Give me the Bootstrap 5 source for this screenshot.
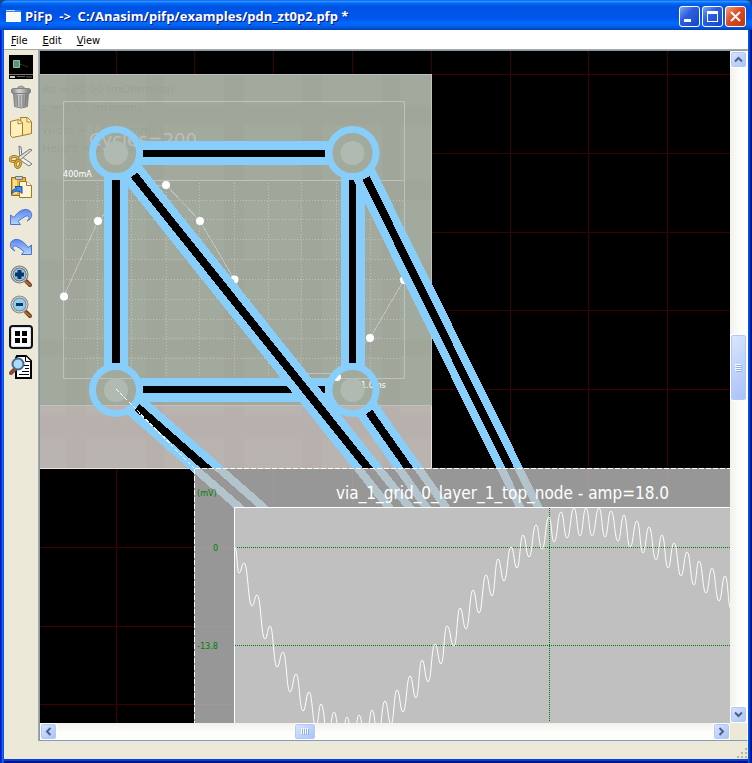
<!DOCTYPE html>
<html lang="en">
<head>
<meta charset="utf-8">
<meta name="viewport" content="width=device-width, initial-scale=1">
<title>PiFp</title>
<link href="https://cdn.jsdelivr.net/npm/bootstrap@5.3.0/dist/css/bootstrap.min.css" rel="stylesheet">
<style>
body{background:#174a7c;font-family:"DejaVu Sans Condensed","DejaVu Sans",sans-serif;font-size:11px;line-height:14px}
button{font:inherit}
.win{background:linear-gradient(90deg,#0019cf 0 1px,#0831d9 1px 2px,#166aee 2px 3px,#0855dd 3px 4px,transparent 4px),linear-gradient(270deg,#00138c 0 1px,#001ea0 1px 2px,#0441d8 2px 3px,#0855dd 3px 4px,transparent 4px),linear-gradient(0deg,#00138c 0 2px,#0441d8 2px);border-radius:8px 8px 0 0;overflow:hidden}
.titlebar{height:30px;padding:2px 6px 0 6px;background:linear-gradient(#0058ee 0,#3593ff 4%,#288eff 6%,#127dff 8%,#036ffc 10%,#0262ee 14%,#0057e5 20%,#0054e3 24%,#0055eb 56%,#005bf5 66%,#026afe 76%,#0062ef 86%,#0052d6 93%,#0040bb 100%)}
.wtitle{font-family:"Open Sans","Noto Sans",sans-serif;font-size:13px;line-height:20px;font-weight:700;color:#fff;text-shadow:1px 1px #0a1883;white-space:pre}
.wbtns{gap:2px}
.wbtn{width:21px;height:21px;border:1px solid #fff;border-radius:3px;padding:0;background:linear-gradient(135deg,#7ea4f4,#2b5fe0 40%,#1745c8);display:flex}
.wbtn.shut{background:linear-gradient(135deg,#f0a083,#dc4a25 45%,#c03510)}
.inner{margin:0 4px 4px;background:#ece9d8}
.inner,.fill-y{min-height:0}
.menus{height:20px;background:#fff;border-bottom:1px solid #aca899;padding:0 0 0 7px;gap:15px}
.menus button{border:0;background:none;padding:3px 0 0;color:#000;line-height:14px}
.tools{width:35px;border-right:1px solid #aca899;padding:5px 0 0 5px;gap:6px}
.tools button{width:24px;height:24px;border:0;padding:0;background:none;display:flex}
.view{border:1px solid #7f9db9;border-right-color:#fff;min-width:0}
.scene{background:#000;flex:1 1 0;min-width:0;min-height:0}
.scene svg{display:block;width:100%;height:100%}
.sbv{width:17px;background:linear-gradient(90deg,#f3f1ec,#fefefb 60%)}
.sbh{height:17px;background:linear-gradient(#f3f1ec,#fefefb 60%)}
.corner{width:17px;background:#ece9d8}
.sb{flex:0 0 17px;width:17px;height:17px;padding:0;border:1px solid #fff;border-radius:3px;background:linear-gradient(135deg,#dbe6ff,#c0d3fc 50%,#a9c1f6);box-shadow:inset 0 0 0 1px #b4c8f6;display:flex;align-items:center;justify-content:center}
.sb.tv{flex-basis:67px}
.sb.th{flex-basis:22px}
.before-v{flex:266 1 0}.after-v{flex:305 1 0}
.before-h{flex:237 1 0}.after-h{flex:397 1 0}
.status{height:18px;padding:0 1px 1px 0}
.t9{font:9px "DejaVu Sans Condensed","DejaVu Sans",sans-serif}
.t11{font:11px "DejaVu Sans","Noto Sans",sans-serif}
.t17{font:17px "DejaVu Sans Condensed","DejaVu Sans",sans-serif}
.t18{font:18px "DejaVu Sans","Noto Sans",sans-serif}
</style>
<script src="https://cdn.jsdelivr.net/npm/bootstrap@5.3.0/dist/js/bootstrap.bundle.min.js"></script>
</head>
<body>
<div class="win vh-100 d-flex flex-column">
<header class="titlebar d-flex align-items-center">
  <svg width="15" height="12" viewBox="0 0 15 12" class="flex-shrink-0" aria-hidden="true"><path fill="#fff" d="M0 0h15v12H0z"/><path fill="#2f86e8" d="M0 0h15v2H0z"/><path fill="#bfe0ff" d="M0 0h9v1H0z"/><path fill="#f8faf8" d="M1 3h13v8H1z"/></svg>
  <h1 class="wtitle m-0 ms-1 flex-grow-1 text-truncate">PiFp  -&gt;  C:/Anasim/pifp/examples/pdn_zt0p2.pfp *</h1>
  <div class="wbtns d-flex flex-shrink-0">
    <button class="wbtn" aria-label="Minimize"><svg width="19" height="19"><path fill="#fff" d="M4 12h7v3H4z"/></svg></button>
    <button class="wbtn" aria-label="Maximize"><svg width="19" height="19"><path fill="#fff" fill-rule="evenodd" d="M4 4h11v11H4zm1 3v7h9V7z"/></svg></button>
    <button class="wbtn shut" aria-label="Close"><svg width="19" height="19"><path stroke="#fff" stroke-width="2" d="M5 5l9 9M14 5l-9 9"/></svg></button>
  </div>
</header>
<div class="inner flex-grow-1 d-flex flex-column">
<nav class="menus d-flex flex-shrink-0" aria-label="Main">
  <button><u>F</u>ile</button><button><u>E</u>dit</button><button><u>V</u>iew</button>
</nav>
<div class="fill-y d-flex flex-grow-1">
  <div class="tools d-flex flex-column flex-shrink-0" role="toolbar" aria-label="Tools">
    <button aria-label="Layout"><svg width="24" height="24"><path d="M0 0h24v24H0z"/><path fill="#5a9473" stroke="#8cbfa0" d="M4.500 5.500h6v7h-6z"/><path stroke="#445" stroke-dasharray="2 1" d="M11 9l8 3"/><path fill="#777" d="M0 19h24v1H0z"/><path fill="#ccc" d="M1 21h5v2H1z"/><path fill="#666" d="M8 21h8v1H8z"/><path fill="#333" d="M17 21h6v2h-6z"/></svg></button>
    <button aria-label="Delete"><svg width="24" height="24"><defs><linearGradient id="gb"><stop stop-color="#808080"/><stop offset=".4" stop-color="#d4d4d4"/><stop offset="1" stop-color="#777"/></linearGradient></defs><path fill="none" stroke="#999" stroke-width="2" d="M8 4q4-5 8 0"/><path fill="url(#gb)" stroke="#888" d="M4.500 7.500h15l-1 14q-6.500 3-13 0z"/><path stroke="#7c7c7c" d="M8 10l.5 11M11 10v12M14 10v12M17 10l-1 11"/><rect x="2.500" y="3.500" width="19" height="5" rx="2" fill="url(#gb)" stroke="#808080"/></svg></button>
    <button aria-label="Copy"><svg width="24" height="24"><path fill="#fbe6a6" stroke="#a87b1d" d="M11.500 2.500h7l4 4v12l-9 2z"/><path fill="#fff4cf" stroke="#b08a33" d="M18 2.500V7h4.500"/><path fill="#fff0bf" stroke="#a87b1d" d="M1.500 6.500l8-2 4 3v13l-10 2-2-2z"/><path fill="#fff8e0" stroke="#b08a33" d="M9 5v4l4-1"/></svg></button>
    <button aria-label="Cut"><svg width="24" height="24"><path fill="#f2f2f2" stroke="#777" d="M10 1l2 1 1 10 10 7-3 2-9-6z"/><path fill="#ddd" stroke="#777" d="M23 5l-2-1L8 13l2 3z"/><ellipse cx="5" cy="14" rx="4" ry="2.500" fill="none" stroke="#a8801c" stroke-width="3" transform="rotate(-10 5 14)"/><ellipse cx="5" cy="14" rx="4" ry="2.500" fill="none" stroke="#e2b448" transform="rotate(-10 5 14)"/><ellipse cx="9" cy="19" rx="2.500" ry="3.500" fill="none" stroke="#a8801c" stroke-width="3" transform="rotate(20 9 19)"/><ellipse cx="9" cy="19" rx="2.500" ry="3.500" fill="none" stroke="#e2b448" transform="rotate(20 9 19)"/></svg></button>
    <button aria-label="Paste"><svg width="24" height="24"><path fill="#e8b53c" stroke="#9a6d10" d="M2.500 2.500h14v18h-14z"/><path fill="#f8df8c" d="M4 4h4v15H4z"/><path fill="#ccc" stroke="#777" d="M6.500 1.500h7v3h-7z"/><path fill="#fff5d4" stroke="#a07a2a" d="M10.500 6.500h7l5 4v12h-12z"/><path fill="#fff" stroke="#a07a2a" d="M17.500 6.500v4h5"/><path fill="#3b8df0" stroke="#1450a8" d="M2.500 19c0-4 2-5 5-5l-1.500-2.500 7 0v7l-2-2c-4-1-6 0-8.500 2.500z"/></svg></button>
    <button aria-label="Undo"><svg width="24" height="24"><defs><linearGradient id="ga" x2="0" y2="1"><stop stop-color="#5b86e8"/><stop offset="1" stop-color="#b5d8ff"/></linearGradient></defs><path id="arr" fill="url(#ga)" stroke="#4d70d8" stroke-linejoin="round" d="M1.500 10v9.500h10L9 16.500c5-4 8-6 10-5.500 2 1 1 3-1 5 5-2 6-7 3-10-5-4-12 0-16 6.500z"/></svg></button>
    <button aria-label="Redo"><svg width="24" height="24"><use href="#arr" transform="matrix(-1 0 0 1 24 0)"/></svg></button>
    <button aria-label="Zoom in"><svg width="24" height="24"><path stroke="#6b3a20" stroke-width="4" stroke-linecap="round" d="M17 16l4 4"/><path stroke="#b06a40" stroke-width="2" stroke-linecap="round" d="M16 16l5 4"/><circle cx="10.500" cy="9.500" r="7.500" fill="#8cc8ea" stroke="#777" stroke-width="3"/><circle cx="10.500" cy="9.500" r="7.500" fill="none" stroke="#ddd"/><path stroke="#0a3568" stroke-width="4" d="M6 9.500h9M10.500 5v9"/></svg></button>
    <button aria-label="Zoom out"><svg width="24" height="24"><path stroke="#6b3a20" stroke-width="4" stroke-linecap="round" d="M17 17l4 4"/><path stroke="#b06a40" stroke-width="2" stroke-linecap="round" d="M16 17l5 4"/><circle cx="10.500" cy="9.500" r="7.500" fill="#8cd0f0" stroke="#888" stroke-width="3"/><circle cx="10.500" cy="9.500" r="7.500" fill="none" stroke="#ddd"/><path stroke="#0a3568" stroke-width="3" d="M7 9.500h7"/></svg></button>
    <button aria-label="Fit all"><svg width="24" height="24"><rect x="1" y="1" width="22" height="22" rx="3" fill="#fff" stroke="#111" stroke-width="2"/><rect x="2.500" y="2.500" width="19" height="19" rx="2" fill="none" stroke="#cfe2f5"/><path d="M6 6h5v5H6zm7 0h5v5h-5zm-7 7h5v5H6zm7 0h5v5h-5z"/></svg></button>
    <button aria-label="Preview"><svg width="24" height="24"><path fill="#fff" stroke="#000" stroke-width="2" d="M8 1h9l5 5v17H7V3z"/><path fill="#fff" stroke="#000" d="M16.500 1v5.500H22"/><path stroke="#000" d="M15 10.500h5M16 13.500h4M13 16.500h7M10 19.500h10"/><path stroke="#8a4a30" stroke-width="4" stroke-linecap="round" d="M2 18l4-4"/><circle cx="9" cy="9" r="5.500" fill="#a9dcf8" stroke="#456a90" stroke-width="2"/></svg></button>
  </div>
  <main class="view flex-grow-1 d-flex flex-column">
    <div class="fill-y d-flex flex-grow-1">
      <div class="scene">
      <svg role="img" aria-label="Power delivery network layout with waveform plot">
      <g transform="translate(-40 -51)">
        <path fill="none" stroke="#3c0000" shape-rendering="crispEdges" d="M116.500 51V900M194.500 51V900M273.500 51V900M352.500 51V900M431.500 51V900M510.500 51V900M588.500 51V900M667.500 51V900M0 74.500H2000M0 153.500H2000M0 232.500H2000M0 310.500H2000M0 389.500H2000M0 468.500H2000M0 547.500H2000M0 626.500H2000M0 704.500H2000"/>
        <path fill="#a2aa9e" d="M40 74h391v331H40z"/>
        <path fill="#bab4b0" d="M40 405h391v63H40z"/>
        <path fill="#807060" fill-opacity=".05" d="M66 74h20v394H66zM146 74h18v394h-18zM224 74h20v394h-20zM302 74h20v394h-20zM382 74h18v394h-18zM40 105h391v20H40zM40 180h391v20H40zM40 260h391v20H40zM40 340h391v16H40zM40 415h391v24H40z"/>
        <g fill="#9aa297" class="t11">
          <text x="42" y="93">Rs = 20.00 (mOhms/sq)</text><text x="42" y="111">L = 1.00 (nH/mm)</text><text x="42" y="134">Width = 1.000 (mm)</text><text x="42" y="152">Height = 1.000 (mm)</text>
        </g>
        <g fill="none" stroke="#c0c0c0" shape-rendering="crispEdges">
          <path d="M40 74.500H431.500V468.500H40M40 405.500H431M63.500 101.500H404.500V378.500H63.500zM64 180.500H404"/>
          <path stroke="#e8e0da" d="M431.500 406V468.500H40"/>
          <path stroke-dasharray="1 2" d="M66 200.500H404M66 219.500H404M66 239.500H404M66 259.500H404M66 279.500H404M66 299.500H404M66 319.500H404M66 338.500H404M66 358.500H404M97.500 183V378M131.500 183V378M166.500 183V378M199.500 183V378M234.500 183V378M268.500 183V378M301.500 183V378M336.500 183V378M370.500 183V378"/>
          <path d="M64 296L98 221 132 185H166L200 221 234 279 268 338 302 373H337L370 338 404 280"/>
        </g>
        <text class="t18" x="89" y="146" fill="#bcbfba">Cycles=200</text>
        <text class="t9" x="63" y="177" fill="#fff">400mA</text>
        <text class="t9" x="361" y="388" fill="#fff">1.0 ns</text>
        <g fill="#fff"><circle cx="64" cy="296.500" r="4"/><circle cx="98" cy="221" r="4"/><circle cx="166" cy="185" r="4"/><circle cx="200" cy="221" r="4"/><circle cx="234.500" cy="279.500" r="4"/><circle cx="337" cy="377" r="4"/><circle cx="370" cy="338" r="4"/><circle cx="404" cy="280" r="4"/></g>
        <path stroke="#87cefa" stroke-width="24" shape-rendering="crispEdges" d="M140 153H328M140 389.500H328M116 177V366M352.500 177V366"/>
        <g stroke="#000" stroke-width="7" shape-rendering="crispEdges"><path d="M143 153.500H325M143 389.500H325M352.500 180V363"/><path stroke-width="8" d="M116 180V363"/></g>
        <g shape-rendering="crispEdges">
          <path stroke="#87cefa" stroke-width="24" d="M130 170L415 527M363 172L544 537M132 402.600L285 537M365.500 407L457 537"/>
          <path stroke="#000" stroke-width="8" d="M134 175L415 527M366 178L544 537M137 407L285 537M369 412L457 537"/>
        </g>
        <path stroke="#fff" stroke-dasharray="4 2" shape-rendering="crispEdges" d="M116 389L194 468"/>
        <g fill="none" stroke="#87cefa" stroke-width="7"><circle cx="116" cy="153" r="23.500"/><circle cx="352.500" cy="153" r="23.500"/><circle cx="116" cy="390" r="23.500"/><circle cx="352.500" cy="390" r="23.500"/></g>
        <g fill="#b1bab1"><circle cx="116" cy="153" r="12"/><circle cx="352.500" cy="153" r="12"/><circle cx="116" cy="390" r="12"/><circle cx="352.500" cy="390" r="12"/></g>
        <path stroke="#fff" stroke-dasharray="4 2" shape-rendering="crispEdges" d="M116 389L138 411"/>
        <path fill="#c0c0c0" fill-opacity=".785" d="M194 468H2000V2000H194z"/>
        <path fill="#c0c0c0" d="M234 507H2000V2000H234z"/>
        <g fill="none" stroke="#fff" shape-rendering="crispEdges">
          <path stroke-dasharray="5 2" d="M194.500 468.500H2000M194.500 468.500V2000"/>
          <path d="M234.500 2000V507.500H2000"/>
          <path stroke="#008000" stroke-dasharray="1 1" d="M235 547.500H2000M235 645.500H2000M549.500 508V722"/>
        </g>
        <path id="wave" fill="none" stroke="#fff"/>
        <text class="t17" x="336" y="499" fill="#fff">via_1_grid_0_layer_1_top_node - amp=18.0</text>
        <g class="t9" fill="#008000"><text x="197" y="496">(mV)</text><text x="213" y="551">0</text><text x="197" y="649">-13.8</text></g>
      </g>
      </svg>
      </div>
      <div class="sbv d-flex flex-column flex-shrink-0">
        <button class="sb" aria-label="Scroll up"><svg width="9" height="7"><path fill="none" stroke="#4d6185" stroke-width="2" d="M1 5.500L4.500 2 8 5.500"/></svg></button>
        <div class="before-v"></div>
        <button class="sb tv" aria-label="Vertical position"><svg width="7" height="8"><path stroke="#fff" d="M0 .5h6M0 2.500h6M0 4.500h6M0 6.500h6"/><path stroke="#8cb0f8" d="M1 1.500h6M1 3.500h6M1 5.500h6M1 7.500h6"/></svg></button>
        <div class="after-v"></div>
        <button class="sb" aria-label="Scroll down"><svg width="9" height="7"><path fill="none" stroke="#4d6185" stroke-width="2" d="M1 1.500L4.500 5 8 1.500"/></svg></button>
      </div>
    </div>
    <div class="d-flex flex-shrink-0">
      <div class="sbh d-flex flex-grow-1">
        <button class="sb" aria-label="Scroll left"><svg width="7" height="9"><path fill="none" stroke="#4d6185" stroke-width="2" d="M5.500 1L2 4.500 5.500 8"/></svg></button>
        <div class="before-h"></div>
        <button class="sb th" aria-label="Horizontal position"><svg width="8" height="7"><path stroke="#fff" d="M.5 0v6M2.500 0v6M4.500 0v6M6.500 0v6"/><path stroke="#8cb0f8" d="M1.500 1v6M3.500 1v6M5.500 1v6M7.500 1v6"/></svg></button>
        <div class="after-h"></div>
        <button class="sb" aria-label="Scroll right"><svg width="7" height="9"><path fill="none" stroke="#4d6185" stroke-width="2" d="M1.500 1L5 4.500 1.500 8"/></svg></button>
      </div>
      <div class="corner flex-shrink-0"></div>
    </div>
  </main>
</div>
<footer class="status d-flex flex-shrink-0 justify-content-end align-items-end">
  <svg width="10" height="10" aria-hidden="true"><path fill="#b8b4a2" d="M8 0h2v2H8zM4 4h2v2H4zm4 0h2v2H8zM0 8h2v2H0zm4 0h2v2H4zm4 0h2v2H8z"/></svg>
</footer>
</div>
</div>
<script>
// Turning points of the node voltage: alternating troughs and peaks.
const turns = [[235,547],[239,573],[244,563],[252,606],[257,595],[265,639],[270,626],[277,667],[283,652],[290,692],[296,674],[303,711],[309,692],[316,727],[321,704],[328,738],[334,712],[341,745],[347,717],[353,748],[359,715],[366,745],[372,710],[378,736],[385,701],[391,724],[397,690],[403,712],[410,676],[416,698],[422,660],[428,682],[435,644],[441,664],[447,626],[454,646],[460,608],[466,629],[473,590],[479,613],[486,575],[492,596],[498,559],[504,581],[511,547],[517,568],[523,535],[529,557],[536,525],[542,549],[549,517],[554,542],[561,512],[567,538],[574,508],[580,536],[586,508],[592,536],[599,508],[605,537],[611,511],[618,541],[624,515],[630,547],[637,521],[643,553],[649,527],[656,560],[662,535],[668,568],[674,543],[681,576],[687,552],[694,585],[699,561],[706,593],[712,568],[719,601],[725,576],[731,609]];
let d = `M${turns[0]}`;
for (let i = 1; i < turns.length; i++) {
  const [x0, y0] = turns[i - 1], [x1, y1] = turns[i], m = (x0 + x1) / 2;
  d += `C${m} ${y0} ${m} ${y1} ${x1} ${y1}`;
}
document.getElementById('wave').setAttribute('d', d);
</script>
</body>
</html>
